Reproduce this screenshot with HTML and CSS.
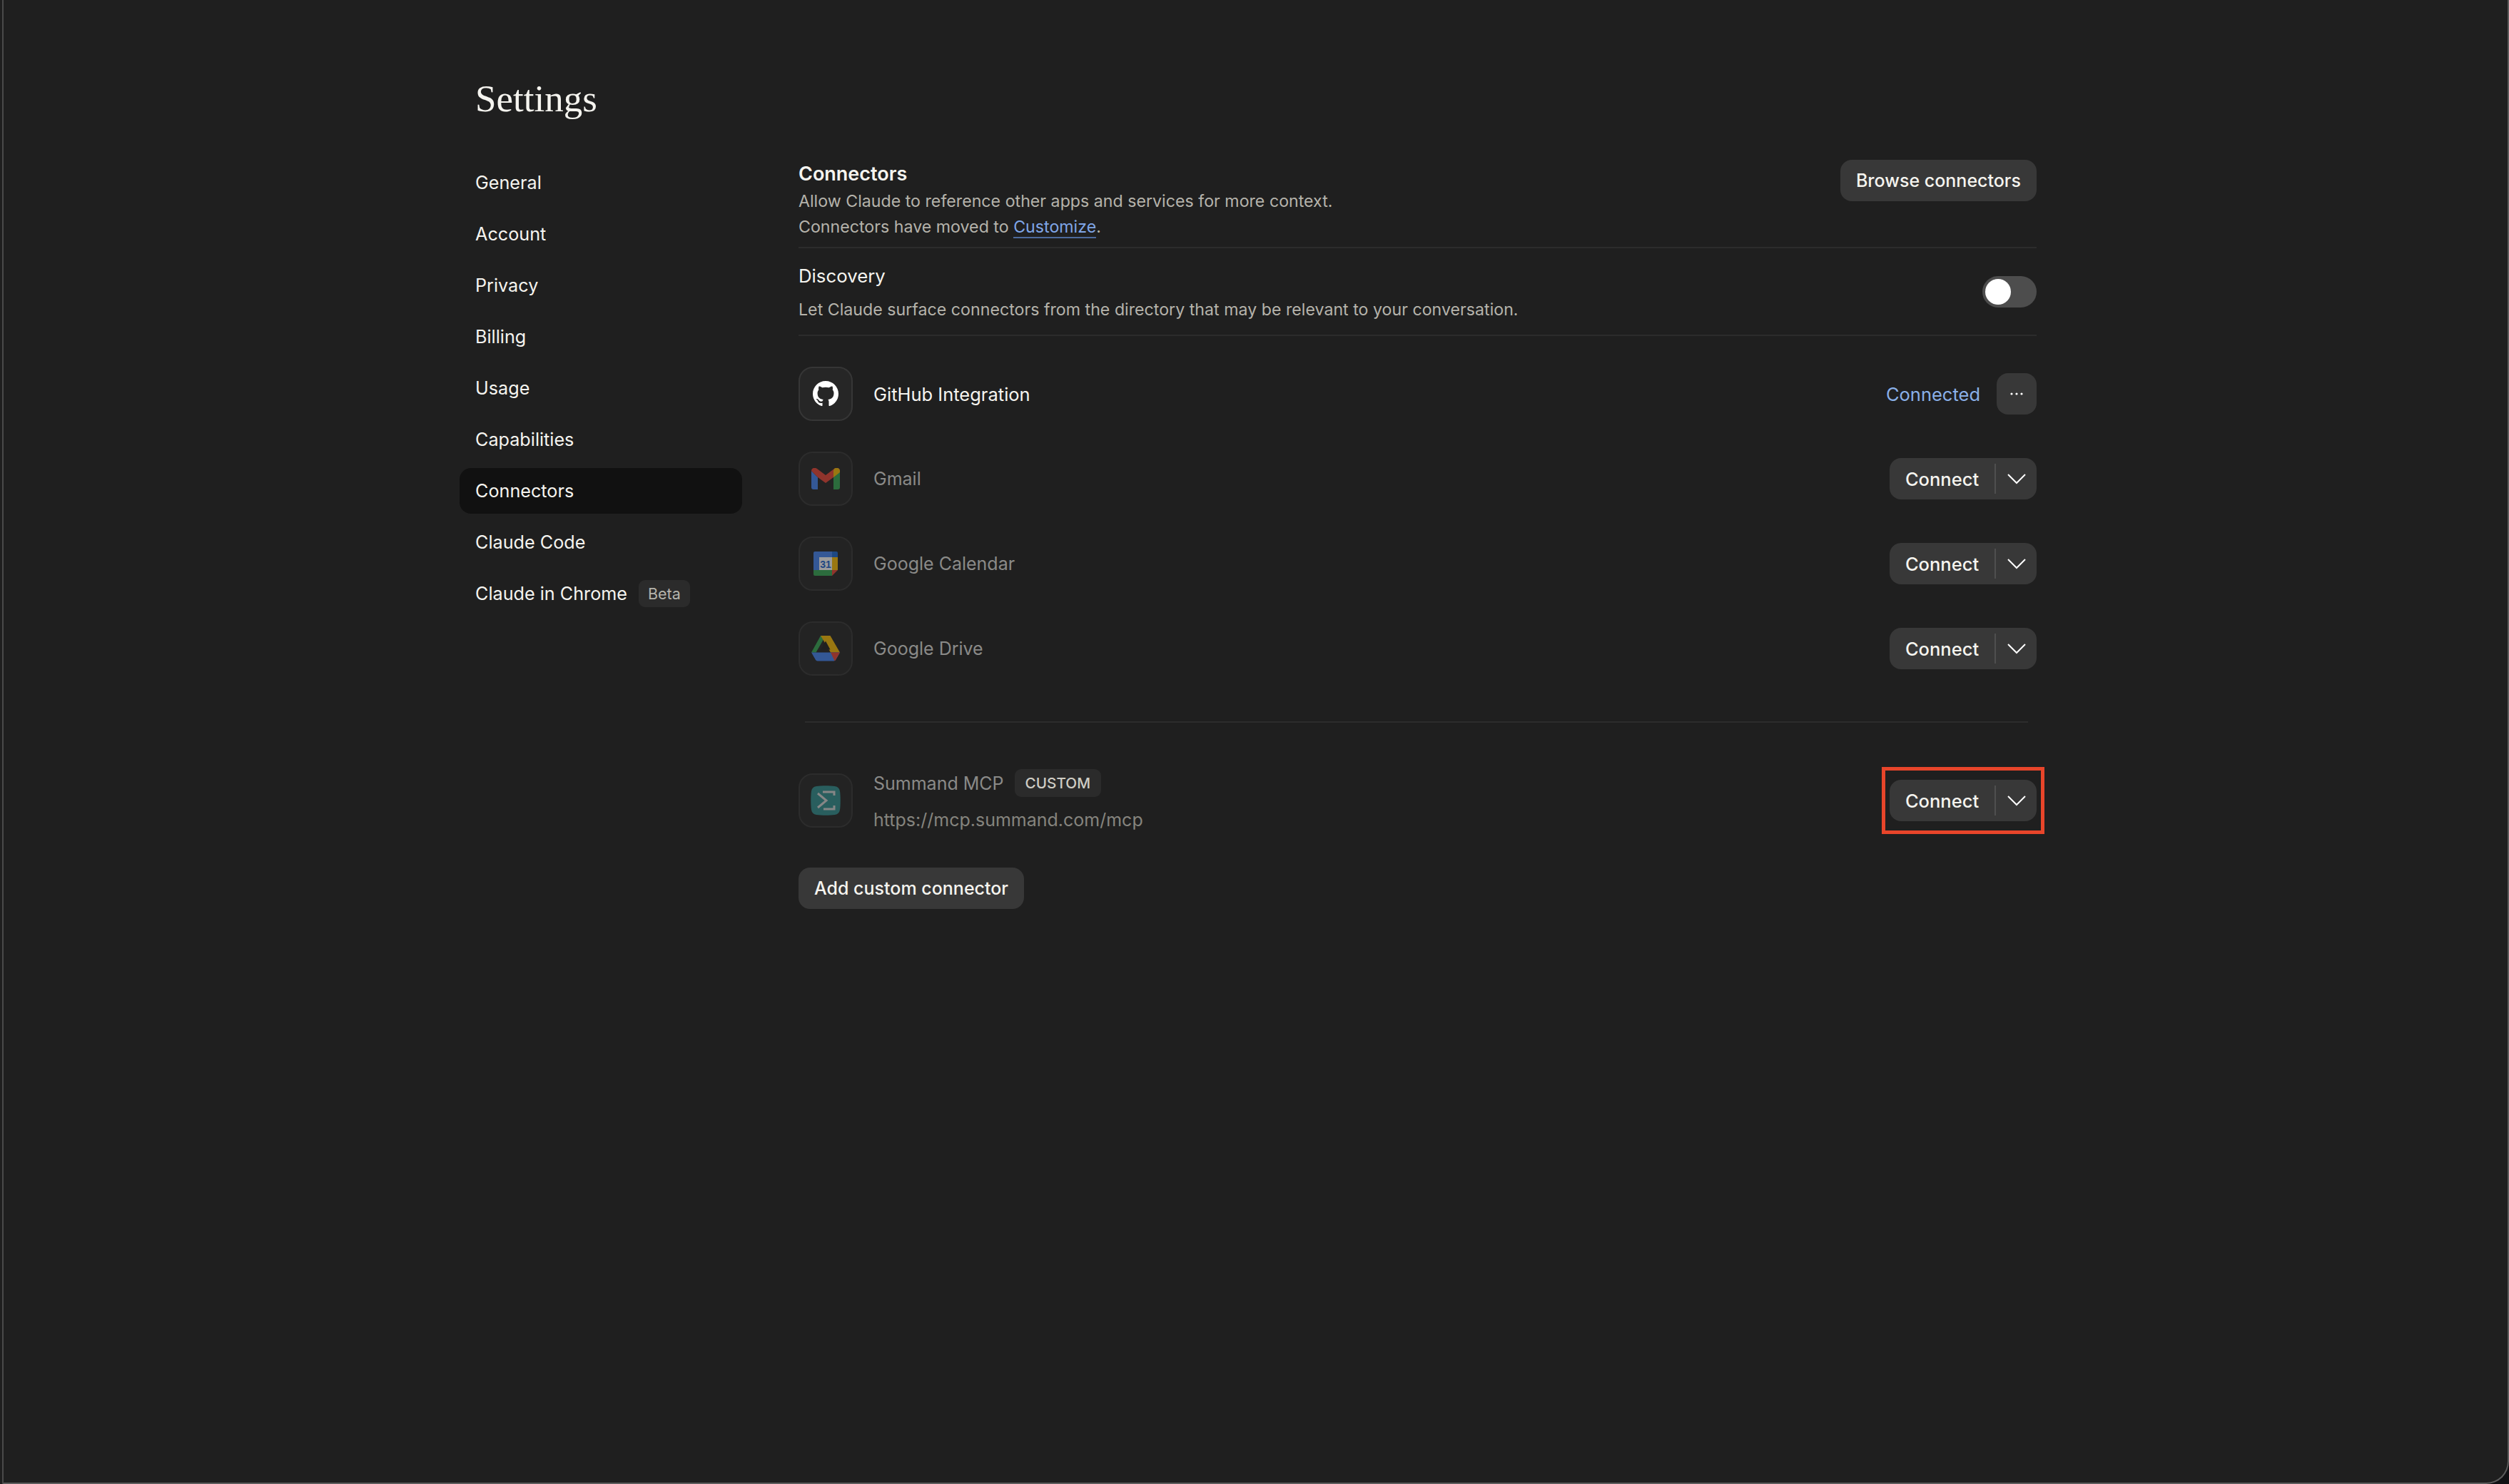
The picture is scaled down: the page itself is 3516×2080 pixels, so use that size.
FILE: index.html
```html
<!DOCTYPE html>
<html lang="en">
<head>
    <meta charset="UTF-8">
    <title>Settings</title>
    <link rel="stylesheet" href="styles.css">
</head>
<body>
    <div class="window">
        <div class="page">
            <h1 class="title">Settings</h1>
            <div class="columns">
                <nav class="nav">
                    <a class="nav-item">General</a>
                    <a class="nav-item">Account</a>
                    <a class="nav-item">Privacy</a>
                    <a class="nav-item">Billing</a>
                    <a class="nav-item">Usage</a>
                    <a class="nav-item">Capabilities</a>
                    <a class="nav-item active">Connectors</a>
                    <a class="nav-item">Claude Code</a>
                    <a class="nav-item">Claude in Chrome <span class="nav-badge">Beta</span></a>
                </nav>
                <main class="main">
                    <section class="head">
                        <div>
                            <h2 class="head-title">Connectors</h2>
                            <p class="muted">Allow Claude to reference other apps and services for more context.</p>
                            <p class="muted">Connectors have moved to <a class="link">Customize</a>.</p>
                        </div>
                        <button class="btn">Browse connectors</button>
                    </section>
                    <section class="discovery">
                        <div class="discovery-text">
                            <h3 class="discovery-title">Discovery</h3>
                            <p class="muted">Let Claude surface connectors from the directory that may be relevant to your conversation.</p>
                        </div>
                        <div class="toggle"><span class="knob"></span></div>
                    </section>
                    <section class="list">
                        <div class="row">
                            <div class="icon-box">
                                <svg width="36" height="36" viewBox="0 0 16 16"><path fill="#fff" d="M8 0C3.58 0 0 3.58 0 8c0 3.54 2.29 6.53 5.47 7.59.4.07.55-.17.55-.38 0-.19-.01-.82-.01-1.49-2.01.37-2.53-.49-2.69-.94-.09-.23-.48-.94-.82-1.13-.28-.15-.68-.52-.01-.53.63-.01 1.08.58 1.23.82.72 1.21 1.87.87 2.33.66.07-.52.28-.87.51-1.07-1.78-.2-3.64-.89-3.64-3.95 0-.87.31-1.59.82-2.15-.08-.2-.36-1.02.08-2.12 0 0 .67-.21 2.2.82.64-.18 1.32-.27 2-.27s1.36.09 2 .27c1.53-1.04 2.2-.82 2.2-.82.44 1.1.16 1.92.08 2.12.51.56.82 1.27.82 2.15 0 3.07-1.87 3.75-3.65 3.95.29.25.54.73.54 1.48 0 1.07-.01 1.93-.01 2.2 0 .21.15.46.55.38A8.01 8.01 0 0 0 16 8c0-4.42-3.58-8-8-8z"/></svg>
                            </div>
                            <span class="name github">GitHub Integration</span>
                            <div class="actions">
                                <span class="connected">Connected</span>
                                <button class="btn more">
                                    <svg width="20" height="6" viewBox="0 0 20 6"><circle cx="3" cy="3" r="1.6" fill="#fff"/><circle cx="10" cy="3" r="1.6" fill="#fff"/><circle cx="17" cy="3" r="1.6" fill="#fff"/></svg>
                                </button>
                            </div>
                        </div>
                        <div class="row off">
                            <div class="icon-box">
                                <svg class="logo" width="40" height="30" viewBox="0 0 40 30">
                                    <path fill="#4285f4" d="M0 4v23a3 3 0 0 0 3 3h6V13z"/>
                                    <path fill="#34a853" d="M31 13v17h6a3 3 0 0 0 3-3V4z"/>
                                    <path fill="#ea4335" d="M0 4c0-4 5-5.500 8-3l12 9 12-9c3-2.500 8-1 8 3l-9 9-11 8-11-8-9-9z"/>
                                    <path fill="#fbbc04" d="M31 13V3.500l1-2.500c3-2.500 8-1 8 3v2z"/>
                                </svg>
                            </div>
                            <span class="name">Gmail</span>
                            <div class="actions">
                                <div class="split">
                                    <button class="split-main">Connect</button>
                                    <button class="split-arrow"><svg width="26" height="16" viewBox="0 0 26 16"><path d="M1 2 13 14 25 2" fill="none" stroke="#fff" stroke-width="2"/></svg></button>
                                </div>
                            </div>
                        </div>
                        <div class="row off">
                            <div class="icon-box">
                                <svg class="logo" width="34" height="34" viewBox="0 0 34 34">
                                    <path fill="#4285f4" d="M2 0h30v8H8v18H0V2a2 2 0 0 1 2-2z"/>
                                    <path fill="#fbbc04" d="M26 8h8v18h-8z"/>
                                    <path fill="#34a853" d="M0 26h26v8H2a2 2 0 0 1-2-2z"/>
                                    <path fill="#ea4335" d="M26 26h8l-8 8z"/>
                                    <path fill="#1967d2" d="M32 0a2 2 0 0 1 2 2v6h-8V0z"/>
                                    <rect x="8" y="8" width="18" height="18" fill="#fff"/>
                                    <text class="cal-day" x="17" y="22.500">31</text>
                                </svg>
                            </div>
                            <span class="name">Google Calendar</span>
                            <div class="actions">
                                <div class="split">
                                    <button class="split-main">Connect</button>
                                    <button class="split-arrow"><svg width="26" height="16" viewBox="0 0 26 16"><path d="M1 2 13 14 25 2" fill="none" stroke="#fff" stroke-width="2"/></svg></button>
                                </div>
                            </div>
                        </div>
                        <div class="row off">
                            <div class="icon-box">
                                <svg class="logo" width="40" height="36" viewBox="0 0 40 36">
                                    <path fill="#34a853" d="M13 0h7L6.500 23.500H0z"/>
                                    <path fill="#fbbc04" d="M13 0h13.500L40 23.500H27z"/>
                                    <path fill="#4285f4" d="M6.500 23.500H40L34 34a3 3 0 0 1-2.500 1.500H8.500A3 3 0 0 1 6 34L0 23.500z"/>
                                    <path fill="#ea4335" d="M27 23.500h13L34 34a3 3 0 0 1-1.500 1.200z"/>
                                    <path fill="#1e1e1e" d="M20 7.500 26.500 19.500h-13z"/>
                                </svg>
                            </div>
                            <span class="name">Google Drive</span>
                            <div class="actions">
                                <div class="split">
                                    <button class="split-main">Connect</button>
                                    <button class="split-arrow"><svg width="26" height="16" viewBox="0 0 26 16"><path d="M1 2 13 14 25 2" fill="none" stroke="#fff" stroke-width="2"/></svg></button>
                                </div>
                            </div>
                        </div>
                    </section>
                    <hr class="rule">
                    <section class="row custom off">
                        <div class="icon-box">
                            <svg class="logo" width="42" height="42" viewBox="0 0 42 42">
                                <path fill="#2f8f8f" d="M8 1C14 0 28 0 34 1c4 .6 6.400 3 7 7 1 6 1 20 0 26-.6 4-3 6.400-7 7-6 1-20 1-26 0-4-.6-6.400-3-7-7C0 28 0 14 1 8c.6-4 3-6.400 7-7z"/>
                                <path d="M10 11 22 21 10 31" fill="none" stroke="#d8d8d8" stroke-width="3"/>
                                <path d="M17 9H33V14M33 28V33H18" fill="none" stroke="#d8d8d8" stroke-width="3"/>
                            </svg>
                        </div>
                        <div class="custom-text">
                            <div class="custom-name"><span class="name">Summand MCP</span><span class="tag">CUSTOM</span></div>
                            <div class="url">https://mcp.summand.com/mcp</div>
                        </div>
                        <div class="actions">
                            <div class="highlight">
                                <div class="split">
                                    <button class="split-main">Connect</button>
                                    <button class="split-arrow"><svg width="26" height="16" viewBox="0 0 26 16"><path d="M1 2 13 14 25 2" fill="none" stroke="#fff" stroke-width="2"/></svg></button>
                                </div>
                            </div>
                        </div>
                    </section>
                    <button class="btn add">Add custom connector</button>
                </main>
            </div>
        </div>
    </div>
</body>
</html>
```

FILE: styles.css
```css
* {
    box-sizing: border-box;
}

html, body {
    margin: 0;
    height: 100%;
}

body {
    /* left edge of the window sits on the same grey, only the corner shows the dark behind */
    background: linear-gradient(90deg, #1f1f1f 50%, #111114 50%);
    font-family: Inter, "Liberation Sans", sans-serif;
    color: #f5f4ef;
}

.window {
    height: 2080px;
    margin-left: 3px;
    background: #1f1f1f;
    border-left: 2px solid #4a4a4a;
    border-right: 2px solid #5c5c5c;
    border-bottom: 2px solid #5c5c5c;
    border-bottom-right-radius: 32px;
}

.page {
    padding: 0 660px 0 662px;
}

.title {
    margin: 0 0 0 -1px;
    padding-top: 108px;
    height: 224px;
    font-family: "Liberation Serif", serif;
    font-size: 53px;
    line-height: 60px;
    font-weight: 400;
}

.columns {
    display: flex;
    gap: 79px;
}

.nav {
    width: 396px;
    margin-left: -23px;
    flex-shrink: 0;
    display: flex;
    flex-direction: column;
    gap: 8px;
}

.nav-item {
    height: 64px;
    padding-left: 22px;
    border-radius: 16px;
    display: flex;
    align-items: center;
    font-size: 25.200px;
}

.nav-item.active {
    background: #111111;
}

.nav-badge {
    margin-left: 16px;
    padding: 0 13px;
    height: 38px;
    line-height: 38px;
    border-radius: 9px;
    background: #2b2b2b;
    color: #b5b3ab;
    font-size: 21.500px;
}

.main {
    flex: 1;
}

p {
    margin: 0;
}

.muted {
    font-size: 23.200px;
    line-height: 36px;
    color: #b5b3ab;
}

.link {
    color: #7fa6e8;
    border-bottom: 2px solid #4d6a9c;
}

.head {
    display: flex;
    justify-content: space-between;
    align-items: flex-start;
    height: 124px;
    border-bottom: 2px solid #2c2c2c;
}

.head-title {
    margin: 0;
    padding-top: 2px;
    height: 40px;
    font-size: 27px;
    line-height: 36px;
    font-weight: 600;
}

.discovery {
    display: flex;
    justify-content: space-between;
    align-items: center;
    height: 123px;
    border-bottom: 2px solid #2c2c2c;
}

.discovery-text {
    padding-top: 3px;
}

.discovery-title {
    margin: 0 0 11px;
    font-size: 25.800px;
    line-height: 36px;
    font-weight: 400;
}

.toggle {
    width: 76px;
    height: 44px;
    padding: 4px;
    border-radius: 22px;
    background: #4d4d4d;
}

.knob {
    display: block;
    width: 36px;
    height: 36px;
    border-radius: 50%;
    background: #fff;
}

.btn {
    height: 58px;
    padding: 0 22px;
    border: none;
    border-radius: 16px;
    background: #383838;
    color: #f5f4ef;
    font-family: inherit;
    font-size: 25px;
    font-weight: 500;
}

.more {
    width: 56px;
    padding: 0;
    display: flex;
    align-items: center;
    justify-content: center;
}

.list {
    padding-top: 43px;
    display: flex;
    flex-direction: column;
    gap: 43px;
}

.row {
    height: 76px;
    display: flex;
    align-items: center;
}

.icon-box {
    width: 76px;
    height: 76px;
    flex-shrink: 0;
    border: 2px solid #363636;
    border-radius: 20px;
    background: #262626;
    display: flex;
    align-items: center;
    justify-content: center;
}

.row.off .icon-box {
    border-color: #2c2c2c;
    background: #232323;
}

.logo {
    opacity: 0.55;
}

.name {
    margin-left: 29px;
    font-size: 25px;
}

.name.github {
    font-size: 25.500px;
}

.row.off .name {
    color: #8a8a88;
}

.actions {
    margin-left: auto;
    display: flex;
    align-items: center;
    gap: 23px;
}

.connected {
    color: #8ab0e8;
    font-size: 25.500px;
}

.split {
    width: 206px;
    height: 58px;
    border-radius: 16px;
    background: #383838;
    display: flex;
    align-items: center;
}

.split-main {
    width: 149px;
    height: 42px;
    border: none;
    border-right: 2px solid #4f4f4f;
    background: none;
    color: #f5f4ef;
    font-family: inherit;
    font-size: 25.500px;
    font-weight: 500;
}

.split-arrow {
    flex: 1;
    padding: 0;
    border: none;
    background: none;
    display: flex;
    justify-content: center;
}

.rule {
    margin: 64px 12px 0 9px;
    border: none;
    border-top: 2px solid #2c2c2c;
}

.custom {
    margin-top: 71px;
}

.custom-text {
    margin: -2px 0 0 29px;
    display: flex;
    flex-direction: column;
    gap: 17px;
}

.custom-name {
    display: flex;
    align-items: center;
}

.custom-name .name {
    margin-left: 0;
}

.tag {
    margin-left: 15px;
    padding: 0 15px;
    height: 39px;
    line-height: 39px;
    border-radius: 9px;
    background: #2b2b2b;
    color: #cfcdc5;
    font-size: 20.700px;
    font-weight: 500;
}

.url {
    font-size: 25px;
    color: #85847e;
}

.highlight {
    margin-right: -11px;
    padding: 13px 6px;
    border: 5px solid #e8452a;
}

.add {
    margin-top: 56px;
}

.cal-day {
    font-family: "Liberation Sans", sans-serif;
    font-size: 14px;
    font-weight: 700;
    fill: #1967d2;
    text-anchor: middle;
}
```
